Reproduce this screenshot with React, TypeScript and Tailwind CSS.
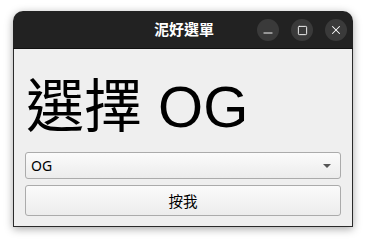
import { Minus, Square, X } from 'lucide-react';

export default function App() {
  return (
    <div className="w-[366px] h-[244px] bg-white pt-[11px] pl-[13px]">
      <div className="w-[340px] h-[216px] flex flex-col rounded-t-[10px] shadow-[0_2px_8px_rgba(0,0,0,0.35)]">
        {/* title bar */}
        <div className="h-[38px] shrink-0 rounded-t-[10px] bg-[#222222] flex items-center relative border-b border-[#111]">
          <div className="flex-1 text-center text-white text-[15px] font-semibold pl-[2px] font-['Noto_Sans_CJK_TC',sans-serif]">
            泥好選單
          </div>
          <div className="absolute right-[6px] top-[8px] flex gap-[12px]">
            <div className="w-[22px] h-[22px] rounded-full bg-[#3a3a3a] flex items-center justify-center">
              <Minus size={14} strokeWidth={1.6} className="text-white mt-[5px]" />
            </div>
            <div className="w-[22px] h-[22px] rounded-full bg-[#3a3a3a] flex items-center justify-center">
              <Square size={11} strokeWidth={2} className="text-white" />
            </div>
            <div className="w-[22px] h-[22px] rounded-full bg-[#3a3a3a] flex items-center justify-center">
              <X size={14} strokeWidth={1.8} className="text-white" />
            </div>
          </div>
        </div>
        {/* body */}
        <div className="flex-1 bg-[#efefef] border-x border-b border-[#2b2b2b] px-[11px] pt-[25px] flex flex-col">
          <div className="text-[58px] leading-[66px] text-black pl-[1px] font-['Liberation_Sans','Noto_Sans_CJK_TC',sans-serif]">
            選擇 OG
          </div>
          <div className="mt-[12px] h-[27px] rounded-[3px] border border-[#ababab] bg-gradient-to-b from-[#fbfbfb] to-[#ececec] flex items-center justify-between pl-[5px] pr-[9px]">
            <span className="text-[14px] text-black font-['Noto_Sans','Noto_Sans_CJK_TC',sans-serif]">OG</span>
            <span className="w-0 h-0 border-l-[4px] border-r-[4px] border-t-[4px] border-l-transparent border-r-transparent border-t-[#555]" />
          </div>
          <div className="mt-[6px] h-[31px] rounded-[3px] border border-[#ababab] bg-gradient-to-b from-[#fbfbfb] to-[#ececec] flex items-center justify-center">
            <span className="text-[14.5px] text-black font-['Noto_Sans_CJK_TC',sans-serif]">按我</span>
          </div>
        </div>
      </div>
    </div>
  );
}
